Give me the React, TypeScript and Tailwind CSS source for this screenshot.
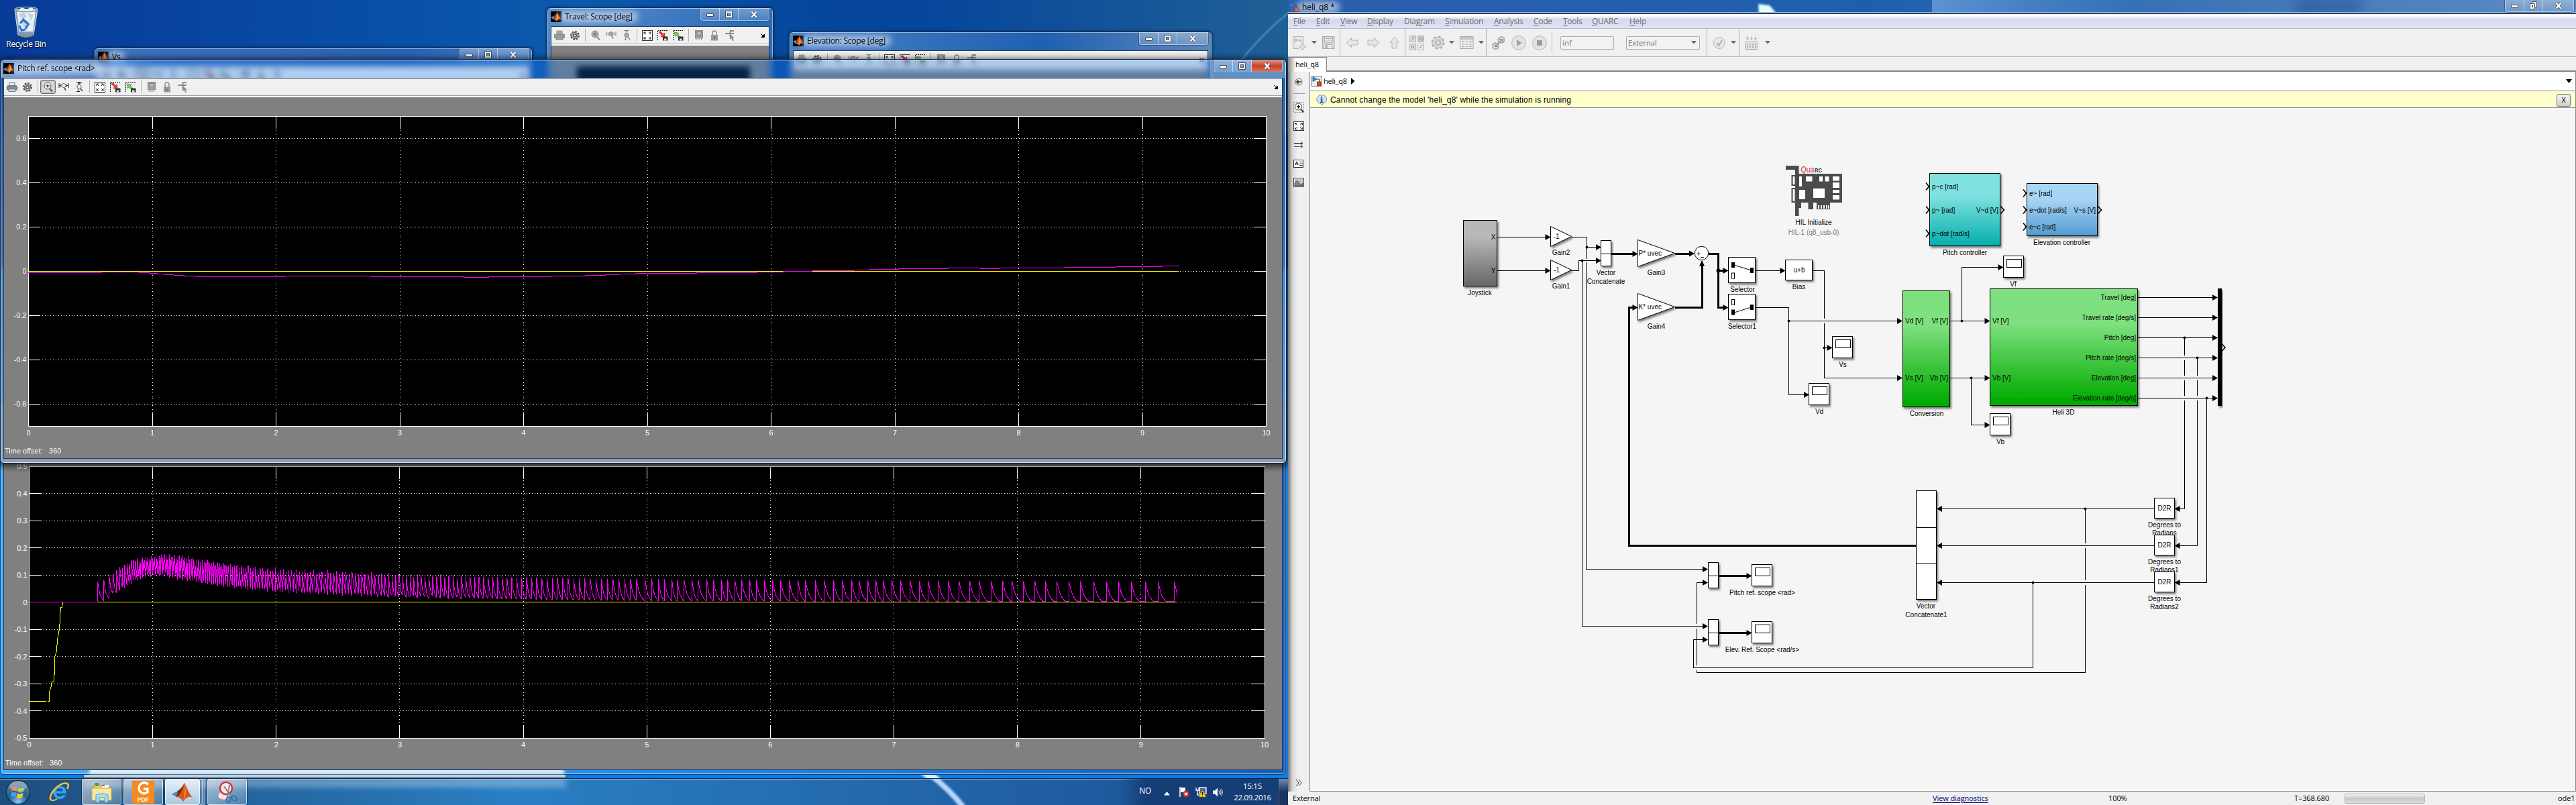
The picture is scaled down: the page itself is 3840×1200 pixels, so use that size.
import React from 'react';

const UI = "font-['Open_Sans','Noto_Sans',sans-serif]";
const ARIAL = "font-['Liberation_Sans',Arial,sans-serif]";

/* ---------- small icons ---------- */

function MatlabIcon({ s = 16 }: { s?: number }) {
  return (
    <svg width={s} height={s} viewBox="0 0 16 16" className="shrink-0">
      <rect width="16" height="16" fill="#000" />
      <path d="M0 9 L5 6.5 L7 9 L4 12 Z" fill="#4aa3b8" />
      <path d="M5 6.5 L9.500 1 L8 11 L4 12 Z" fill="#6b2a1a" />
      <path d="M9.500 1 C11 4 13 9 15.500 12 C13 10 11.500 11 9 15 C8 13 6 12 4 12 C7 10 8 6 9.500 1Z" fill="#e8651c" />
      <path d="M9.500 1.500 C10.200 5 10 9 9 14 C11 11 11.500 8 9.500 1.500Z" fill="#f7c04a" />
    </svg>
  );
}

function SimulinkIcon({ framed }: { framed?: boolean }) {
  return (
    <svg width="16" height="16" viewBox="0 0 16 16" className="shrink-0">
      {framed && <rect x=".5" y=".5" width="15" height="15" fill="#f0f0f0" stroke="#777" />}
      <path d="M2 1.500 L8 5 L2 8.500Z" fill="#2a8fd0" stroke="#1a5a90" strokeWidth=".8" />
      <path d="M8 5 H11.500 V9" stroke="#333" fill="none" />
      <rect x="8.500" y="9" width="5.500" height="5.500" fill="#e05020" stroke="#802000" strokeWidth=".8" />
    </svg>
  );
}

function Svg16({ children, className = '' }: { children: React.ReactNode; className?: string }) {
  return (
    <svg width="16" height="16" viewBox="0 0 16 16" fill="none" className={'shrink-0 ' + className}>
      {children}
    </svg>
  );
}

const Printer = ({ dim }: { dim?: boolean }) => (
  <Svg16>
    <path d="M4 1 H12 V6 H4Z" fill={dim ? '#aaa' : '#dfe9f5'} stroke={dim ? '#999' : '#6a7f99'} />
    <rect x=".5" y="6" width="15" height="6" rx="1" fill={dim ? '#999' : '#8b8f94'} stroke={dim ? '#8a8a8a' : '#555'} />
    <path d="M3 11 H13 V14.500 H3Z" fill={dim ? '#a5a5a5' : '#d3e4f5'} stroke={dim ? '#909090' : '#5e7c99'} />
  </Svg16>
);
const Gear = () => (
  <Svg16>
    <circle cx="8" cy="8" r="5.200" stroke="#555" strokeWidth="3.600" strokeDasharray="2.500 1.500" />
    <circle cx="8" cy="8" r="4.500" fill="#c4c4c4" stroke="#666" />
    <circle cx="8" cy="8" r="2.200" fill="#f0f0f0" stroke="#333" strokeWidth="1.200" />
  </Svg16>
);
const Zoom = ({ dim }: { dim?: boolean }) => (
  <Svg16>
    <circle cx="7" cy="6" r="5" fill={dim ? '#aaa' : '#e9f1fa'} stroke={dim ? '#888' : '#555'} />
    <path d="M4.500 6 H9.500 M7 3.500 V8.500" stroke={dim ? '#666' : '#111'} />
    <path d="M10 10 L14 14.500" stroke={dim ? '#888' : '#444'} strokeWidth="2" />
  </Svg16>
);
const ZoomX = ({ dim }: { dim?: boolean }) => (
  <Svg16>
    <path d="M1 2 V9 M15 2 V9 M1.500 5.500 H4 M12 5.500 H14.500" stroke={dim ? '#888' : '#222'} />
    <path d="M4.500 3.500 L2.500 5.500 L4.500 7.500 M11.500 3.500 L13.500 5.500 L11.500 7.500" stroke={dim ? '#888' : '#222'} />
    <circle cx="8" cy="5.500" r="3" fill={dim ? '#aaa' : '#eef'} stroke={dim ? '#888' : '#666'} />
    <path d="M9 9 L11 12.500" stroke={dim ? '#888' : '#444'} strokeWidth="1.600" />
  </Svg16>
);
const ZoomY = ({ dim }: { dim?: boolean }) => (
  <Svg16>
    <path d="M4 .5 H12 M4 14.500 H9 M8 1 V4 M6.500 11 V14 M6 3 L8 1.200 L10 3" stroke={dim ? '#888' : '#222'} />
    <circle cx="8" cy="7.500" r="3.200" fill={dim ? '#aaa' : '#eef'} stroke={dim ? '#888' : '#666'} />
    <path d="M10 10 L13 14" stroke={dim ? '#888' : '#444'} strokeWidth="1.600" />
  </Svg16>
);
const Fit = () => (
  <Svg16>
    <rect x=".5" y=".5" width="15" height="15" fill="#fff" stroke="#333" />
    <path d="M3 6 V3 H6 M10 3 H13 V6 M3 10 V13 H6 M13 10 V13 H10 M3.500 3.500 L6 6 M12.500 3.500 L10 6 M3.500 12.500 L6 10 M12.500 12.500 L10 10" stroke="#222" />
  </Svg16>
);
const SaveAxes = ({ green }: { green?: boolean }) => (
  <Svg16>
    <path d="M.5 15 V.5 H15.500" stroke="#111" strokeDasharray="2 1" />
    {green ? (
      <path d="M11.500 10 L7 6 L9 4.500 L2.500 3 L3.500 9.500 L5 7.500 L9.500 12Z" fill="#7ed957" stroke="#2f7d1a" strokeWidth=".8" />
    ) : (
      <path d="M2 3 L7 7.500 L5 9.500 L11 10.500 L10.500 4 L8.500 6 L4.500 1.500Z" fill="#f04040" stroke="#b01010" strokeWidth=".8" />
    )}
    <rect x="8" y="9.500" width="7.500" height="6" fill="#333" />
    <rect x="10" y="12.500" width="3.500" height="3" fill="#ddd" />
  </Svg16>
);
const Chip = () => (
  <Svg16>
    <rect x="2.500" y=".5" width="11" height="11.500" fill="#a0a0a0" stroke="#888" />
    <rect x="5" y="2.500" width="6" height="5" fill="#bcbcbc" stroke="#808080" />
    <path d="M4 13 V15 M6.500 13 V15 M9 13 V15 M11.500 13 V15" stroke="#999" />
  </Svg16>
);
const Lock = () => (
  <Svg16>
    <path d="M5 8 V4 a3 3 0 0 1 6 0 V8" stroke="#888" strokeWidth="1.400" />
    <rect x="3" y="7" width="10" height="8.500" fill="#9a9a9a" />
    <path d="M8 10 V13" stroke="#666" strokeWidth="1.500" />
  </Svg16>
);
const Probe = () => (
  <Svg16>
    <path d="M1 5 H14 M8 1 H14 M8.500 1 V10" stroke="#8c8c8c" strokeWidth="2" />
    <path d="M8 5 L15 12 L12.500 12 L14 15.500 L12 16 L10.500 12.500 L8 14Z" fill="#909090" />
  </Svg16>
);

const Sep = () => (
  <div className="flex h-full w-2 shrink-0 justify-center py-[3px]">
    <div className="w-px bg-[#b0b0b0]" />
  </div>
);
const Cell = ({ children, on }: { children: React.ReactNode; on?: boolean }) => (
  <div
    className={
      on
        ? 'flex h-[21px] w-[23px] shrink-0 items-center justify-center rounded-[3px] border border-[#6e6e6e] bg-[#d8d8d8] shadow-[inset_0_0_2px_1px_#b0b0b0]'
        : 'flex h-[21px] w-[23px] shrink-0 items-center justify-center'
    }
  >
    {children}
  </div>
);

function ScopeToolbar({ active }: { active?: boolean }) {
  const dim = !active;
  return (
    <div className="flex h-[28px] shrink-0 items-start border-b-2 border-white bg-[#f0f0f0] shadow-[inset_0_-1px_0_#a0a0a0]">
      <div className="flex h-[25px] w-full items-center">
        <Cell><Printer dim={dim} /></Cell>
        <Cell><Gear /></Cell>
        <Sep />
        <Cell on={active}><Zoom dim={dim} /></Cell>
        <Cell><ZoomX dim={dim} /></Cell>
        <Cell><ZoomY dim={dim} /></Cell>
        <Sep />
        <Cell><Fit /></Cell>
        <Cell><SaveAxes /></Cell>
        <Cell><SaveAxes green /></Cell>
        <Sep />
        <Cell><Chip /></Cell>
        <Cell><Lock /></Cell>
        <Cell><Probe /></Cell>
        <svg width="8" height="8" viewBox="0 0 8 8" className="mr-[5px] ml-auto">
          <path d="M1 1 L4.500 4.500 M6.500 2 V6.500 H2Z" fill="#000" stroke="#000" strokeWidth="1" />
        </svg>
      </div>
    </div>
  );
}

function Caption({ red, restore }: { red?: boolean; restore?: boolean }) {
  return (
    <div className="flex h-[19px] w-[103px] shrink-0 overflow-hidden rounded-b-[4px] border border-t-0 border-white/50 bg-white/10 shadow-[0_0_0_1px_rgba(10,30,70,.35)]">
      <div className="flex w-[28px] items-end justify-center border-r border-white/50 bg-linear-to-b from-white/25 to-white/5 pb-[5px]">
        <div className="h-[5px] w-[11px] rounded-[1px] border border-[#444a5c] bg-white" />
      </div>
      <div className="flex w-[28px] items-center justify-center border-r border-white/50 bg-linear-to-b from-white/25 to-white/5">
        {restore ? (
          <svg width="11" height="12" viewBox="0 0 11 12">
            <path d="M3.500 .5 H10.500 V8.500 H3.500Z" fill="#fff" stroke="#444a5c" />
            <path d="M.5 3.500 H7.500 V11.500 H.5Z" fill="#fff" stroke="#444a5c" />
            <rect x="3" y="6" width="2" height="3" fill="#444a5c" />
          </svg>
        ) : (
          <div className="flex size-[11px] items-center justify-center rounded-[1px] border border-[#444a5c] bg-white">
            <div className="size-[5px] border border-[#444a5c] bg-[#7f9fc8]" />
          </div>
        )}
      </div>
      <div
        className={
          red
            ? 'flex flex-1 items-center justify-center bg-linear-to-b from-[#e39a8c] via-[#c4402a] via-50% to-[#d8745a]'
            : 'flex flex-1 items-center justify-center bg-linear-to-b from-white/25 to-white/5'
        }
      >
        <svg width="12" height="11" viewBox="0 0 12 11">
          <path d="M2.500 1.500 L9.500 9.500 M9.500 1.500 L2.500 9.500" stroke="#444a5c" strokeWidth="4" />
          <path d="M2.500 1.500 L9.500 9.500 M9.500 1.500 L2.500 9.500" stroke="#fff" strokeWidth="2.400" />
        </svg>
      </div>
    </div>
  );
}

function TitleBar({ title, red }: { title: string; red?: boolean }) {
  return (
    <div className="flex h-[27px] shrink-0 items-start justify-between">
      <div className="flex items-center pt-[5px]">
        <MatlabIcon />
        <div className="relative ml-[5px]">
          <div className="absolute -inset-x-2 inset-y-0 rounded-full bg-white/55 blur-[5px]" />
          <div className={`relative text-[12px] leading-4 tracking-[-0.25px] whitespace-nowrap text-black ${UI}`}>{title}</div>
        </div>
      </div>
      <Caption red={red} />
    </div>
  );
}

/* ---------- scope plots ---------- */

function Grid({ x0, x1, y0, y1, ys, tickX, tickY }: { x0: number; x1: number; y0: number; y1: number; ys: [number, string][]; tickX: number; tickY: number }) {
  const step = (x1 - x0) / 10;
  const px = (n: number) => Math.floor(n) + 0.5;
  const [l, r, t, b] = [x0, x1, y0, y1].map(Math.floor);
  return (
    <g className={ARIAL} fontSize="11" fill="#fff">
      <rect x={px(x0)} y={px(y0)} width={px(x1) - px(x0)} height={px(y1) - px(y0)} fill="#000" stroke="#fff" />
      {Array.from({ length: 9 }, (_, i) => px(x0 + step * (i + 1))).map((x) => (
        <g key={x} stroke="#fff">
          <path d={`M${x} ${t + tickY + 2} V${b - tickY}`} strokeDasharray="1 5 1 3" />
          <path d={`M${x} ${t} v${tickY} M${x} ${b} v${-tickY}`} />
        </g>
      ))}
      {ys.map(([y, label]) => (
        <g key={y}>
          {y > y0 + 4 && y < y1 - 4 && (
            <g stroke="#fff">
              <path d={`M${l + tickX + 3} ${px(y)} H${r - tickX}`} strokeDasharray="1 3" />
              <path d={`M${l} ${px(y)} h${tickX} M${r} ${px(y)} h${-tickX}`} />
            </g>
          )}
          <text x={x0 - 3} y={y + 4} textAnchor="end">{label}</text>
        </g>
      ))}
      {Array.from({ length: 11 }, (_, i) => (
        <text key={i} x={x0 + step * i} y={y1 + 13.5} textAnchor="middle">{i}</text>
      ))}
    </g>
  );
}

const pitchSteps: [number, number][] = [
  [37, 109], [131, 106], [180, 109], [193, 112], [204, 115], [214, 118], [226, 121], [239, 124], [255, 127], [369, 124], [482, 127],
  [602, 130], [634, 127], [715, 124], [760, 121], [786, 118], [803, 115], [825, 112], [904, 109], [982, 106], [1018, 103], [1055, 100],
  [1108, 97], [1129, 94], [1166, 91], [1231, 88], [1273, 91], [1298, 88], [1382, 85], [1449, 82], [1508, 79], [1531, 79],
];
const pitchPath = pitchSteps
  .map(([x, y], i) => {
    const X = Math.round(x * 1.148);
    const Y = Math.floor(370 + y / 3) + 0.5;
    return i === 0 ? `M${X} ${Y}` : `H${X} V${Y}`;
  })
  .join(' ');

const tops: [number, number][] = [[145, 866], [156, 862], [168, 852], [184, 843], [199, 834], [214, 832], [232, 829], [245, 827], [272, 829], [294, 834], [318, 838], [349, 842], [380, 846], [428, 850], [526, 853], [588, 856], [673, 858], [765, 860], [918, 862], [1200, 864], [1500, 865], [1760, 866]];
const bottoms: [number, number][] = [[145, 896], [155, 894], [162, 889], [168, 885], [184, 875], [202, 864], [220, 857], [245, 856], [269, 862], [294, 865], [318, 870], [367, 876], [428, 881], [490, 884], [551, 887], [612, 888], [735, 891], [857, 893], [955, 894], [1200, 895], [1760, 896]];
const periods: [number, number][] = [[145, 9.5], [160, 6.5], [180, 3.7], [210, 2.5], [275, 2.5], [330, 3.1], [400, 3.8], [490, 4.4], [612, 5.5], [735, 7], [857, 8.2], [955, 9]];
function interp(t: [number, number][], x: number) {
  if (x <= t[0][0]) return t[0][1];
  for (let i = 1; i < t.length; i++) {
    if (x <= t[i][0]) {
      const [a, b] = t[i - 1];
      const [c, d] = t[i];
      return b + ((d - b) * (x - a)) / (c - a);
    }
  }
  return t[t.length - 1][1];
}
const lateSpikes = [3, 19, 35, 50, 67, 81, 97, 117, 132, 152, 169, 189, 203, 221, 238, 258, 273, 293, 313, 333, 353, 375, 393, 417, 439, 461, 483, 506, 524, 545, 564, 583, 603, 625, 647, 670, 691, 716, 741, 767, 793, 816, 845, 873, 896, 923, 952, 978, 1005, 1034, 1062, 1095, 1126, 1156, 1187, 1221, 1252, 1291].map((v) => Math.floor(960 + v * 0.6122) + 0.5);

function spikePath() {
  const xs: number[] = [];
  let x = 145.5;
  while (x < 957) {
    xs.push(x);
    x += interp(periods, x);
  }
  xs.push(...lateSpikes);
  let d = 'M44 896.5 H145.5';
  xs.forEach((s, i) => {
    const end = i + 1 < xs.length ? xs[i + 1] : 1755;
    const wobble = s < 700 ? Math.sin(i * 2.3) * 2.5 : 0;
    const t = interp(tops, s) + wobble;
    const b = interp(bottoms, end) + wobble * 0.8;
    const w = end - s;
    const last = i === xs.length - 1;
    if (last) {
      d += ` V${t} L${s + 2} ${t + 8} L${end} 888`;
      return;
    }
    d += ` L${s} ${t.toFixed(1)}`;
    const h = b - t;
    if (w > 5) {
      const tau = Math.min(w, 14);
      d += ` L${s + tau * 0.2} ${t + h * 0.42} L${s + tau * 0.4} ${t + h * 0.7} L${s + tau * 0.65} ${t + h * 0.88} L${s + tau * 0.9} ${b} H${end}`;
    } else {
      d += ` L${s + w * 0.5} ${t + h * 0.6} L${end - 0.3} ${b.toFixed(1)}`;
    }
  });
  return d;
}
const elevPath = spikePath();

const pitchYs: [number, string][] = [[206, '0.6'], [272, '0.4'], [338, '0.2'], [404, '0'], [470, '-0.2'], [536, '-0.4'], [602, '-0.6']];
const elevYs: [number, string][] = [0.5, 0.4, 0.3, 0.2, 0.1, 0, -0.1, -0.2, -0.3, -0.4, -0.5].map((v) => [896.5 - v * 405, String(v)]);

/* ---------- desktop icons ---------- */

function RecycleBin() {
  return (
    <svg width="38" height="48" viewBox="0 0 38 48">
      <path d="M2 5 L7 43 Q19 49 30 43 L36 5Z" fill="#a9bccb" fillOpacity=".75" stroke="#dfe8ee" />
      <path d="M5 9 L12 2 L20 5 L27 1 L33 8 L29 38 L9 38Z" fill="#e9f0f6" />
      <path d="M8 12 L16 8 L20 16 L12 20Z M21 10 L30 13 L26 22Z M12 24 L20 20 L27 28 L16 33Z" fill="#c3d3e0" />
      <path d="M10 26 l5 -6 l4 5 M9 29 l3 7 l6 -1 M18 34 l4 -7 l-4 -4" stroke="#2d6fd6" strokeWidth="3" fill="none" />
      <ellipse cx="19" cy="5" rx="17" ry="3.500" fill="none" stroke="#8b9aa5" strokeWidth="1.500" />
      <path d="M7 40 Q19 46 31 40 L30 44 Q19 49 8 44Z" fill="#8b8f90" />
    </svg>
  );
}

function TaskButton({ children, stack, bright, wide }: { children: React.ReactNode; stack?: boolean; bright?: boolean; wide?: string }) {
  return (
    <div className="flex h-[39px]">
      <div
        className={`flex h-full items-center justify-center rounded-[3px] border border-white/60 shadow-[0_0_0_1px_rgba(0,20,60,.5)] ${wide ?? 'w-[59px]'} ${bright ? 'bg-linear-to-b from-[#e8f0f8] to-[#a9c8e2]' : 'bg-linear-to-br from-white/60 to-white/20'}`}
      >
        {children}
      </div>
      {stack && (
        <>
          <div className="h-full w-[4px] rounded-r-[3px] border-y border-r border-white/60 bg-white/25" />
          <div className="h-full w-[4px] rounded-r-[3px] border-y border-r border-white/50 bg-white/20" />
        </>
      )}
    </div>
  );
}

function Taskbar() {
  return (
    <div className="absolute inset-x-0 bottom-0 flex h-[40px] items-stretch overflow-hidden border-t border-[#0d2a4d] bg-linear-to-r from-[#1d4e7c] via-[#2a7fc4] via-40% to-[#1c4f92] shadow-[inset_0_1px_0_rgba(255,255,255,.55)]">
      <div className="absolute top-0 left-[128px] h-[12px] w-[716px] bg-white/35 blur-[5px]" />
      <svg className="absolute top-0 left-[1370px]" width="90" height="40" viewBox="0 0 90 40">
        <path d="M12 -10 Q45 15 66 42" stroke="#b5d8ff" strokeWidth="8" fill="none" className="blur-[1.500px]" />
      </svg>
      <div className="absolute top-0 right-0 h-full w-[250px] bg-linear-to-r from-transparent via-[#153e76] via-15% to-[#153e76]" />
      <div className="relative flex w-[122px] items-center">
        <svg width="38" height="38" viewBox="0 0 38 38" className="ml-[8px]">
          <defs>
            <radialGradient id="orb" cx=".5" cy=".9" r=".8">
              <stop offset="0" stopColor="#7fd0f0" />
              <stop offset=".5" stopColor="#1f5f92" />
              <stop offset="1" stopColor="#5c7f99" />
            </radialGradient>
          </defs>
          <circle cx="19" cy="19" r="17.500" fill="url(#orb)" stroke="#0d2a45" strokeWidth="1.200" />
          <path d="M10 13 Q14 9 18 12 L17 18 Q13 15.500 9 18.500Z" fill="#f0562a" />
          <path d="M19.500 12.500 Q24 15 28.500 11.500 L27 18 Q23 21 18.500 18.500Z" fill="#8cc63e" />
          <path d="M8.500 20 Q12.500 17.500 16.700 20 L15.500 26 Q12 24 7.500 26.500Z" fill="#3fa0e8" />
          <path d="M18 20.500 Q22 23 26.700 20 L25 27 Q21 29.500 16.700 27Z" fill="#fcc52c" />
          <ellipse cx="19" cy="10" rx="13" ry="7.500" fill="#fff" opacity=".3" />
        </svg>
        <svg width="34" height="32" viewBox="0 0 34 32" className="ml-[26px]">
          <path d="M17 6.500 a10 10 0 1 0 9.500 13.500 h-5.500 a5 5 0 0 1 -9 -2 h15 q.5 -11.500 -10 -11.500Z M12 14 a5 4.500 0 0 1 9.800 0Z" fill="#35a5ee" stroke="#0d5fae" strokeWidth=".8" fillRule="evenodd" />
          <path d="M4 28 C-2 20 18 -1 28 3 C31 4.500 30 8 28 11" fill="none" stroke="#f3c033" strokeWidth="2.600" />
          <path d="M4 27 C6 29 10 28 13 26" fill="none" stroke="#f3c033" strokeWidth="2" />
        </svg>
      </div>
      <div className="relative flex gap-[3px]">
        <TaskButton>
          <svg width="34" height="32" viewBox="0 0 34 32">
            <path d="M5 4 h8 l2 3 h14 v20 h-24Z" fill="#e9cf7b" stroke="#b89b45" />
            <rect x="7" y="2" width="5" height="5" fill="#3aa646" />
            <rect x="17" y="5" width="10" height="4" fill="#fff" />
            <rect x="17" y="5" width="4" height="2" fill="#d43" />
            <path d="M2 10 h29 v18 h-29Z" fill="#f7e7a4" stroke="#c9ab50" />
            <path d="M8 31 v-11 q9 -4 18 0 v11 h-5 v-7 h-8 v7Z" fill="#a9dcf5" stroke="#4b9ccc" />
          </svg>
        </TaskButton>
        <TaskButton>
          <div className="flex h-[34px] w-[33px] flex-col items-center bg-[#f58a1f]">
            <svg width="26" height="23" viewBox="0 0 26 23">
              <path d="M20 5.500 A8 8 0 1 0 19 17 V12 H13" fill="none" stroke="#fff" strokeWidth="3.400" />
            </svg>
            <span className={`text-[9px] leading-[10px] font-bold text-white ${ARIAL}`}>PDF</span>
          </div>
        </TaskButton>
        <TaskButton bright stack wide="w-[52px]">
          <svg width="34" height="30" viewBox="0 0 34 30">
            <path d="M1 18 L10 13 L14 17 L8 22Z" fill="#3f8fc0" />
            <path d="M10 13 Q16 9 20 1 L17 21 L8 22Z" fill="#7a2a20" />
            <path d="M20 1 C23 7 27 18 33 24 C28 20 24 21 18 29 C16 25 12 22 8 22 C15 19 17 10 20 1Z" fill="#d9541e" />
            <path d="M20 2 C21 9 21 18 18 28 C22 21 23 12 20 2Z" fill="#f9b040" />
          </svg>
        </TaskButton>
        <TaskButton>
          <svg width="34" height="34" viewBox="0 0 34 34">
            <ellipse cx="12" cy="22" rx="9" ry="6" fill="#f6e4e6" stroke="#d9a0a8" />
            <circle cx="15" cy="11" r="9" fill="#fbeff0" stroke="#d2323f" strokeWidth="2.500" />
            <path d="M12 8 L23 25 M20 6 L17 24" stroke="#7d8790" strokeWidth="2" />
            <ellipse cx="27" cy="26" rx="4.500" ry="3" transform="rotate(35 27 26)" fill="none" stroke="#2a7ab8" strokeWidth="2.200" />
            <ellipse cx="18.500" cy="28" rx="2.800" ry="4" fill="none" stroke="#2a7ab8" strokeWidth="2.200" />
          </svg>
        </TaskButton>
      </div>
      <div className={`relative ml-auto flex items-center text-[12px] tracking-[-0.3px] text-white ${UI}`}>
        <span className="mr-[19px] -mt-1 text-[12px]">NO</span>
        <svg width="9" height="6" viewBox="0 0 9 6" className="mt-1 mr-[13px]"><path d="M4.500 0 L9 5.500 H0Z" fill="#fff" /></svg>
        <svg width="17" height="17" viewBox="0 0 17 17" className="mr-[8px]">
          <path d="M2 1 V16" stroke="#fff" strokeWidth="1.500" />
          <path d="M3 2 H10 V9 H3Z" fill="#fff" />
          <circle cx="11" cy="11.500" r="4.800" fill="#d8222a" />
          <path d="M9 9.500 L13 13.500 M13 9.500 L9 13.500" stroke="#fff" strokeWidth="1.500" />
        </svg>
        <svg width="17" height="17" viewBox="0 0 17 17" className="mr-[8px]">
          <path d="M1 2 V6 H5 V2 M3 6 V13 H6" stroke="#fff" strokeWidth="1.300" fill="none" />
          <rect x="6" y="2" width="10" height="9" fill="#4a6c93" stroke="#fff" strokeWidth="1.300" />
          <path d="M10.500 6 L16 16 H5Z" fill="#fbd01e" stroke="#8a6b00" strokeWidth=".6" />
          <path d="M10.500 9 V13 M10.500 14 V15" stroke="#000" strokeWidth="1.300" />
        </svg>
        <svg width="16" height="16" viewBox="0 0 16 16" className="mr-[15px]">
          <path d="M1 5.500 H4 L8 1.500 V14.500 L4 10.500 H1Z" fill="#fff" />
          <path d="M10 5.500 Q11.500 8 10 10.500 M12 4 Q14.500 8 12 12 M14 2.500 Q17 8 14 13.500" stroke="#d5e3f5" fill="none" />
        </svg>
        <div className="mr-[10px] flex w-[58px] flex-col items-center gap-[1px] text-[11.500px] leading-4 whitespace-nowrap">
          <span>15:15</span>
          <span>22.09.2016</span>
        </div>
        <div className="h-full w-[14px] border-l border-white/40 bg-linear-to-b from-[#6b8bb5] via-[#17355e] to-[#17355e] shadow-[-1px_0_0_#0a1c38]" />
      </div>
    </div>
  );
}

function Desktop() {
  return (
    <div className="relative h-[1200px] w-[1920px] shrink-0 overflow-hidden bg-linear-to-b from-[#0a55b8] via-[#1f7fd8] to-[#0c7be0]">
      <div className="absolute inset-x-0 top-0 h-[400px] bg-linear-to-r from-[#083a98] via-[#0b5aae] via-45% to-[#05459c] to-65%" />
      <div className="absolute top-0 right-0 h-[200px] w-[560px] bg-linear-to-r from-transparent to-[#1f6096]" />
      <svg className="absolute top-0 left-[1800px]" width="120" height="120" viewBox="0 0 120 120">
        <path d="M122 18 Q70 60 36 110" stroke="#6fb2d8" strokeWidth="2" fill="none" opacity=".7" className="blur-[1px]" />
      </svg>
      <svg className="absolute top-[1148px] left-[1350px]" width="60" height="20" viewBox="0 0 60 20">
        <path d="M20 -6 L50 20" stroke="#d8f0ff" strokeWidth="14" fill="none" className="blur-[1.500px]" />
      </svg>
      <div className="absolute top-[9px] left-[4px] flex w-[70px] flex-col items-center">
        <RecycleBin />
        <span className={`text-[12px] leading-[18px] tracking-[-0.3px] whitespace-nowrap text-white [text-shadow:1px_1px_2px_#000] ${UI}`}>Recycle Bin</span>
      </div>

      {/* edge of the window that sits behind the lower scope */}
      <div className="absolute top-[1140px] left-[124px] h-[20px] w-[720px] border border-[#2a4a6a] bg-[#c9ced4]" />

      <div className="absolute top-[71px] left-[140px] flex h-[200px] w-[654px] flex-col rounded-t-[6px] border border-[#0b2c5c] bg-linear-to-r from-[#3f73c0] via-[#2a62b4] via-70% to-[#3a78c6] px-[5px] shadow-[0_0_4px_rgba(0,0,0,.6),inset_0_0_0_1px_rgba(255,255,255,.5)]">
        <TitleBar title="Vs" />
        <div className="flex flex-1 flex-col bg-[#808080]"><ScopeToolbar active /></div>
      </div>

      <div className="absolute top-[11px] left-[815px] flex h-[260px] w-[338px] flex-col rounded-t-[6px] border border-[#0b2c5c] bg-linear-to-br from-[#5c8fcf] via-[#2a6cb8] to-[#4a80c0] px-[5px] shadow-[0_0_4px_rgba(0,0,0,.6),inset_0_0_0_1px_rgba(255,255,255,.5)]">
        <TitleBar title="Travel: Scope [deg]" />
        <div className="flex flex-1 flex-col border border-[#1c3a66] bg-[#808080]">
          <ScopeToolbar />
          <div className="mt-[31px] mr-[28px] ml-[38px] flex-1 bg-black" />
        </div>
      </div>

      <div className="absolute top-[47px] left-[1176px] flex h-[200px] w-[631px] flex-col rounded-t-[6px] border border-[#0b2c5c] bg-linear-to-r from-[#4a82c6] via-[#1e60b0] via-60% to-[#5c88ba] px-[5px] shadow-[0_0_4px_rgba(0,0,0,.6),inset_0_0_0_1px_rgba(255,255,255,.5)]">
        <TitleBar title="Elevation: Scope [deg]" />
        <div className="flex flex-1 flex-col border border-[#1c3a66] bg-[#808080]"><ScopeToolbar /></div>
      </div>

      {/* lower scope window */}
      <div className="absolute top-[600px] left-0 h-[555px] w-[1917px] rounded-b-[6px] border border-[#0c3d78] bg-linear-to-r from-[#43b0fb] via-[#1f8bea] to-[#1a5cb8] pr-[4px] pb-[6px] pl-[4px] shadow-[inset_0_0_0_1px_rgba(200,235,255,.8)]">
        <div className="absolute bottom-[1px] left-[132px] h-[6px] w-[708px] bg-white blur-[2px]" />
        <div className="relative h-full overflow-hidden border border-[#1c3a66] bg-[#808080]">
          <svg width="1906" height="547" viewBox="6 601 1906 547">
            <Grid x0={43.5} x1={1885} y0={694.5} y1={1099} ys={elevYs} tickX={19} tickY={19} />
            <path d="M44 896.500 H1754.500" stroke="#ff0" fill="none" />
            <path d="M44 1044.500 H69 M71 1044 H73.500 V1031 L76 1023 L77.500 1015 H80 V1004.500 H81.500 V979 L84 971 L86 950 L88.500 937 L90 912.500 L91 904 H92.500 L93.500 897" stroke="#ff0" fill="none" shapeRendering="crispEdges" />
            <path d={elevPath} stroke="#f0f" fill="none" strokeWidth="1" strokeLinejoin="bevel" shapeRendering="crispEdges" />
            <text x="8" y="1140" fontSize="11" fill="#fff" className={ARIAL} xmlSpace="preserve">Time offset:   360</text>
          </svg>
        </div>
      </div>

      {/* focused scope window */}
      <div className="absolute top-[88px] left-0 flex h-[603px] w-[1918px] flex-col rounded-[6px] border border-[#0d1c33] bg-linear-to-b from-[#1478eb]/30 from-5% via-[#5a9ae0]/40 via-20% to-[#9fb8d6]/55 pr-[5px] pb-[6px] pl-[4px] shadow-[0_2px_10px_3px_rgba(0,0,0,.65),inset_0_0_0_1px_rgba(230,242,255,.8)] backdrop-blur-[4px]">
        <div className="absolute top-px left-px h-[26px] w-[230px] rounded-tl-[5px] bg-linear-to-r from-[#c3d3ec]/60 via-[#c3d3ec]/35 via-60% to-transparent" />
        <div className="absolute top-px right-px h-[26px] w-[112px] rounded-tr-[5px] bg-[#c3d3ec]/40" />
        <div className="relative"><TitleBar title="Pitch ref. scope <rad>" red /></div>
        <div className="relative flex flex-1 flex-col overflow-hidden border border-[#2a3c55] bg-[#808080]">
          <ScopeToolbar active />
          <svg width="1907" height="539" viewBox="6 145 1907 539" className="shrink-0">
            <Grid x0={42.5} x1={1887.5} y0={173} y1={635} ys={pitchYs} tickX={18} tickY={19} />
            <path d={pitchPath} stroke="#f0f" fill="none" shapeRendering="crispEdges" />
            <path d="M43 404.500 H1168 M1211 404.500 H1757" stroke="#ff0" fill="none" />
            <text x="7" y="676" fontSize="11" fill="#fff" className={ARIAL} xmlSpace="preserve">Time offset:   360</text>
          </svg>
        </div>
      </div>

      <Taskbar />
    </div>
  );
}

/* ---------- Simulink diagram ---------- */

type P = { x: number; y: number };
const T = ({ x, y, children, a = 'middle', fill = '#000', s = 10, w }: P & { children: React.ReactNode; a?: 'middle' | 'start' | 'end'; fill?: string; s?: number; w?: number }) => (
  <text x={x} y={y + 3.5} textAnchor={a} fill={fill} fontSize={s} textLength={w} lengthAdjust="spacingAndGlyphs">{children}</text>
);
const Box = ({ x, y, w, h, fill = '#fff' }: P & { w: number; h: number; fill?: string }) => (
  <rect x={x} y={y} width={w} height={h} fill={fill} stroke="#000" filter="url(#sh)" />
);
const AR = ({ x, y }: P) => <path d={`M${x} ${y} l-8 -4.500 v9Z`} fill="#000" />;
const AL = ({ x, y }: P) => <path d={`M${x} ${y} l8 -4.500 v9Z`} fill="#000" />;
const Dot = ({ x, y }: P) => <circle cx={x} cy={y} r="2" fill="#000" />;
const W = ({ d, t }: { d: string; t?: boolean }) => (
  <path d={d} stroke="#000" strokeWidth={t ? 3 : 1} fill="none" shapeRendering="crispEdges" />
);
const Scope = ({ x, y, name, lx }: P & { name: string; lx?: number }) => (
  <g>
    <Box x={x} y={y} w={30} h={32} />
    <rect x={x + 5} y={y + 5} width="22" height="12" fill="#fff" stroke="#000" />
    <T x={lx ?? x + 15.5} y={y + 41.5}>{name}</T>
  </g>
);
const Tri = ({ x, y, w, h, text, tx, name }: P & { w: number; h: number; text: string; tx: number; name: string }) => (
  <g>
    <path d={`M${x} ${y - h / 2} L${x + w} ${y} L${x} ${y + h / 2}Z`} fill="#fff" stroke="#000" filter="url(#sh)" />
    <T x={tx} y={y} a="start">{text}</T>
    <T x={x + w / 2} y={y + h / 2 + 9}>{name}</T>
  </g>
);
const InPort = ({ x, y }: P) => <path d={`M${x - 5} ${y - 5.5} L${x - 0.5} ${y} L${x - 5} ${y + 5.5}`} stroke="#000" strokeWidth="1.600" fill="none" />;
const OutPort = ({ x, y }: P) => <path d={`M${x + 0.5} ${y - 5.5} L${x + 5.5} ${y} L${x + 0.5} ${y + 5.5}`} stroke="#000" strokeWidth="1.600" fill="none" />;

function Diagram() {
  return (
    <svg width="1886" height="1018" viewBox="1953 161 1886 1018" className={`block ${ARIAL}`}>
      <defs>
        <filter id="sh" x="-20%" y="-20%" width="150%" height="150%">
          <feDropShadow dx="2" dy="2.500" stdDeviation="1.500" floodColor="#000" floodOpacity=".5" />
        </filter>
        <linearGradient id="gGray" x2="0" y2="1"><stop offset=".25" stopColor="#b8b8b8" /><stop offset="1" stopColor="#666" /></linearGradient>
        <linearGradient id="gGreen" x2="0" y2="1"><stop offset=".3" stopColor="#7fe07f" /><stop offset=".95" stopColor="#04ac04" /></linearGradient>
        <linearGradient id="gTeal" x2="0" y2="1"><stop offset=".3" stopColor="#80e2e0" /><stop offset="1" stopColor="#05aead" /></linearGradient>
        <linearGradient id="gBlue" x2="0" y2="1"><stop offset=".3" stopColor="#a9d5f5" /><stop offset="1" stopColor="#529bd0" /></linearGradient>
      </defs>

      {/* signal lines */}
      <W d="M2232 353.500 H2305 M2232 403.500 H2305" />
      <AR x={2311.5} y={353.5} /><AR x={2311.5} y={403.5} />
      <W d="M2342 353.500 H2365.500 V368.500 H2380 M2342 403.500 H2353.500 V388.500 H2380" />
      <AR x={2387} y={368.5} /><AR x={2387} y={388.5} />
      <Dot x={2365.5} y={368.5} /><Dot x={2358.5} y={388.5} />
      <W d="M2364.500 368 V386 M2364.500 391 V848.500 H2540 M2358.500 388 V933.500 H2540" />
      <AR x={2546} y={848.5} /><AR x={2546} y={933.5} />
      <W t d="M2402 378.500 H2436 M2497 378.500 H2520 M2547 378.500 H2561.500 V458.500 H2570 M2561 403.500 H2570 M2497 458.500 H2537.500 V396 M2436 458.500 H2428.500 V813.500 H2856" />
      <AR x={2441.5} y={378.5} /><AR x={2526} y={378} /><AR x={2576.5} y={403.5} /><AR x={2576.5} y={458.5} /><AR x={2441.5} y={458.5} />
      <path d="M2537 388 l-4 8.500 h8Z" />
      <circle cx="2561.500" cy="403.500" r="3" />
      <W d="M2617 403.500 H2655 M2702 403.500 H2719.500 V475 M2719.500 482 V563.500 H2830 M2719.500 518.500 H2726" />
      <AR x={2661.5} y={403.5} /><AR x={2836} y={563.5} /><AR x={2731.5} y={518.5} /><Dot x={2719.5} y={518.5} />
      <W d="M2617 458.500 H2666.500 V588.500 H2690 M2666.500 478.500 H2830" />
      <AR x={2697} y={588.5} /><AR x={2836} y={478.5} /><Dot x={2666.5} y={478.5} />
      <W d="M2907 478.500 H2960 M2924.500 478 V398.500 H2980 M2907 563.500 H2960 M2938.500 563 V633.500 H2960" />
      <AR x={2966.5} y={478.5} /><AR x={2986.5} y={398.5} /><AR x={2966.5} y={563.5} /><AR x={2966.5} y={633.5} />
      <Dot x={2924.5} y={478.5} /><Dot x={2938.5} y={563.5} />
      {[443.5, 473.5, 503.5, 533.5, 563.5, 593.5].map((y) => (
        <g key={y}><W d={`M3187 ${y} H3300`} /><AR x={3306} y={y} /></g>
      ))}
      <W d="M3256.500 503 V530 M3256.500 537 V560 M3256.500 567 V590 M3256.500 597 V758.500 H3247 M3275.500 533 V560 M3275.500 567 V590 M3275.500 597 V813.500 H3247 M3289.500 593 V868.500 H3247" />
      <Dot x={3256.5} y={503.5} /><Dot x={3275.5} y={533.5} /><Dot x={3289.5} y={593.5} />
      <AL x={3241.5} y={758.5} /><AL x={3241.5} y={813.5} /><AL x={3241.5} y={868.5} />
      <W d="M3211 758.500 H2892 M3211 813.500 H2892 M3211 868.500 H2892" />
      <AL x={2887} y={758.5} /><AL x={2887} y={813.5} /><AL x={2887} y={868.5} />
      <Dot x={3108.5} y={758.5} /><Dot x={3030.5} y={868.5} />
      <W d="M3108.500 758 V810 M3108.500 817 V865 M3108.500 872 V1002.500 H2529.500 V999 M2529.500 992 V937 M2529.500 930 V868.500 H2540" />
      <W d="M3030.500 868 V995.500 H2524.500 V953.500 H2540" />
      <AR x={2546} y={868.5} /><AR x={2546} y={953.5} />
      <W t d="M2561 858.500 H2605 M2561 943.500 H2605" />
      <AR x={2611.5} y={858.5} /><AR x={2611.5} y={943.5} />

      {/* blocks */}
      <Box x={2181.5} y={328.5} w={50} h={98} fill="url(#gGray)" />
      <T x={2229.5} y={353} a="end">X</T><T x={2229.5} y={403} a="end">Y</T><T x={2206} y={436}>Joystick</T>
      <Tri x={2311.5} y={352.5} w={31} h={30} text="-1" tx={2316} name="Gain2" />
      <Tri x={2311.5} y={402.5} w={31} h={30} text="-1" tx={2316} name="Gain1" />
      <Box x={2386.5} y={358.5} w={15} h={38} /><W d="M2387 378.500 H2401" />
      <T x={2394} y={406}>Vector</T><T x={2394} y={419}>Concatenate</T>
      <Tri x={2441.5} y={377.5} w={55} h={40} text="P* uvec" tx={2442.5} name="Gain3" />
      <Tri x={2441.5} y={457.5} w={55} h={40} text="K* uvec" tx={2442.5} name="Gain4" />
      <circle cx="2536.500" cy="377.500" r="10.200" fill="#fff" stroke="#000" />
      <T x={2532} y={378}>+</T><path d="M2535 383.500 h5" stroke="#000" />

      <Box x={2576.5} y={383.5} w={40} h={38} />
      <rect x="2581" y="391" width="5" height="8" /><rect x="2581.500" y="407" width="4" height="8" fill="none" stroke="#000" />
      <rect x="2609" y="399" width="5" height="8" /><path d="M2585 395 L2609 402.500" stroke="#000" />
      <T x={2597.5} y={431}>Selector</T>
      <Box x={2576.5} y={438.5} w={40} h={38} />
      <rect x="2581.500" y="446.500" width="4" height="8" fill="none" stroke="#000" /><rect x="2581" y="461.500" width="5" height="8" />
      <rect x="2609" y="454" width="5" height="8" /><path d="M2585 466 L2609 458.500" stroke="#000" />
      <T x={2597} y={486}>Selector1</T>
      <Box x={2661.5} y={387.5} w={40} h={30} /><T x={2682} y={402.5}>u+b</T><T x={2681.5} y={427}>Bias</T>
      <Scope x={2731.5} y={501.5} name="Vs" /><Scope x={2696.5} y={571.5} name="Vd" />
      <Scope x={2986.5} y={381.5} name="Vf" lx={3001} /><Scope x={2966.5} y={616.5} name="Vb" />

      <Box x={2876.5} y={258.5} w={105} h={108} fill="url(#gTeal)" />
      <InPort x={2876} y={278} /><InPort x={2876} y={313} /><InPort x={2876} y={348} /><OutPort x={2982} y={313} />
      <T x={2880} y={278} a="start">p~c [rad]</T><T x={2880} y={313} a="start">p~ [rad]</T><T x={2880} y={348} a="start">p~dot [rad/s]</T>
      <T x={2979} y={313} a="end">V~d [V]</T><T x={2929} y={376}>Pitch controller</T>
      <Box x={3021.5} y={273.5} w={105} h={78} fill="url(#gBlue)" />
      <InPort x={3021} y={288} /><InPort x={3021} y={313} /><InPort x={3021} y={338} /><OutPort x={3127} y={313} />
      <T x={3025} y={288} a="start">e~ [rad]</T><T x={3025} y={313} a="start">e~dot [rad/s]</T><T x={3025} y={338} a="start">e~c [rad]</T>
      <T x={3124} y={313} a="end">V~s [V]</T><T x={3073.5} y={361}>Elevation controller</T>

      <Box x={2836.5} y={433.5} w={70} h={173} fill="url(#gGreen)" />
      <T x={2840} y={478} a="start">Vd [V]</T><T x={2904} y={478} a="end">Vf [V]</T><T x={2840} y={563} a="start">Vs [V]</T><T x={2904} y={563} a="end">Vb [V]</T>
      <T x={2872} y={616}>Conversion</T>
      <Box x={2966.5} y={430.5} w={220} h={174} fill="url(#gGreen)" />
      <T x={2970} y={478} a="start">Vf [V]</T><T x={2970} y={563} a="start">Vb [V]</T>
      {['Travel [deg]', 'Travel rate [deg/s]', 'Pitch [deg]', 'Pitch rate [deg/s]', 'Elevation [deg]', 'Elevation rate [deg/s]'].map((t, i) => (
        <T key={t} x={3184} y={443 + i * 30} a="end">{t}</T>
      ))}
      <T x={3076} y={614}>Heli 3D</T>
      <rect x="3306" y="430" width="6" height="175" filter="url(#sh)" /><OutPort x={3311.5} y={518} />

      <Box x={2856.5} y={731.5} w={30} h={162} /><W d="M2857 786.500 H2886 M2857 840.500 H2886" />
      <T x={2871} y={903}>Vector</T><T x={2871.5} y={916}>Concatenate1</T>
      {['Radians', 'Radians1', 'Radians2'].map((t, i) => (
        <g key={t}>
          <Box x={3211.5} y={742.5 + i * 55} w={30} h={30} />
          <T x={3226.5} y={757.5 + i * 55}>D2R</T>
          <T x={3226.5} y={782 + i * 55}>Degrees to</T>
          <T x={3226.5} y={794.5 + i * 55}>{t}</T>
        </g>
      ))}

      <Box x={2546.5} y={838.5} w={15} h={38} /><W d="M2547 858.500 H2561" />
      <Scope x={2611.5} y={841.5} name="Pitch ref. scope <rad>" />
      <Box x={2546.5} y={923.5} w={15} h={38} /><W d="M2547 943.500 H2561" />
      <Scope x={2611.5} y={926.5} name="Elev. Ref. Scope <rad/s>" />

      {/* HIL board */}
      <g fill="#4a4b4d">
        <path d="M2662 247 H2681.500 V322 H2676 V253 H2662Z" />
        <path d="M2681 259 H2746 V302 H2728 V312 H2708 V302 H2703 V312 H2695.500 V302 H2685 V310 H2681Z" />
        <path d="M2670.500 261 h6 v16 h-6Z M2670.500 280 h6 v22 h-6Z" />
      </g>
      <g fill="#fff">
        <path d="M2672.500 263 h3 v12 h-3Z M2672.500 282 h3 v18 h-3Z M2682 263 h4 v15 h-4Z M2682 283 h9 v14 h-9Z M2692 263 h9.500 v7.500 h-9.500Z M2712 263 h5 v7.500 h-5Z M2720.500 263 h6 v7.500 h-6Z" />
        <path d="M2703 281 h17 v14 h-17Z M2732 263 h10 v6.500 h-10Z M2732 272 h10 v8 h-10Z M2732 283 h10 v5 h-10Z M2732 291 h10 v6.500 h-10Z" />
        <path d="M2710 306 h2 v5 h-2Z M2714 306 h2 v5 h-2Z M2718 306 h2 v5 h-2Z M2722 306 h2 v5 h-2Z M2725 306 h1.500 v5 h-1.500Z" />
      </g>
      <text x="2684.500" y="256.500" fontSize="13" fill="#d8202c" textLength="20" lengthAdjust="spacingAndGlyphs">Qua</text>
      <text x="2705" y="256.500" fontSize="9" fontWeight="bold" fill="#222" textLength="11" lengthAdjust="spacingAndGlyphs">RC</text>
      <T x={2703.5} y={331}>HIL Initialize</T>
      <T x={2703.5} y={346} fill="#777">HIL-1 (q8_usb-0)</T>
    </svg>
  );
}

/* ---------- Simulink window ---------- */

const menus: [string, number, string][] = [
  ['File', 1, 'w-[34px]'], ['Edit', 1, 'w-[36px]'], ['View', 1, 'w-[40px]'], ['Display', 1, 'w-[55px]'], ['Diagram', 5, 'w-[61px]'], ['Simulation', 1, 'w-[73px]'],
  ['Analysis', 1, 'w-[59px]'], ['Code', 1, 'w-[44px]'], ['Tools', 1, 'w-[43px]'], ['QUARC', 1, 'w-[56px]'], ['Help', 1, 'w-[40px]'],
];

const Caret = () => (
  <svg width="8" height="5" viewBox="0 0 8 5" className="shrink-0"><path d="M0 0 H8 L4 4.500Z" fill="#6a6a6a" /></svg>
);
const G = '#b4b4b4';

function Toolbar() {
  return (
    <div className="flex h-[42px] shrink-0 items-stretch border-b border-[#b4b4b4] bg-[#f0f0f0]">
      <div className="flex w-[78px] items-center border-r border-[#b4b4b4] pl-[7px]">
        <svg width="20" height="20" viewBox="0 0 20 20" fill="none" stroke={G}>
          <path d="M.5 .5 H16 V11 M9 18.500 H.5 V.5" fill="#e8e8e8" />
          <path d="M3 3 L8 6 L3 9Z M8 6 H12.500 V10" fill="#ccc" />
          <path d="M13 11 H16 V14 H19 V17 H16 V19.500 H13 V17 H10 V14 H13Z" fill="#e4e4e4" />
        </svg>
        <div className="ml-[8px]"><Caret /></div>
        <svg width="19" height="19" viewBox="0 0 19 19" fill="none" stroke="#aaa" className="ml-[8px]">
          <rect x=".5" y=".5" width="17.500" height="18" fill="#d8d8d8" /><rect x="3.500" y="1" width="12" height="8" fill="#f4f4f4" />
          <path d="M5 3.500 H14 M5 6 H14" /><rect x="4.500" y="12.500" width="10" height="6" fill="#eee" /><rect x="6.500" y="14" width="2" height="4" />
        </svg>
      </div>
      <div className="flex w-[97px] items-center gap-[13px] border-r border-[#b4b4b4] pl-[8px]">
        <svg width="19" height="18" viewBox="0 0 19 18"><path d="M1 8.500 L8.500 1.500 V5 H18 V12 H8.500 V15.500Z" fill="#e6e6e6" stroke={G} /></svg>
        <svg width="19" height="18" viewBox="0 0 19 18"><path d="M18 8.500 L10.500 1.500 V5 H1 V12 H10.500 V15.500Z" fill="#e6e6e6" stroke={G} /></svg>
        <svg width="17" height="19" viewBox="0 0 17 19"><path d="M8.500 1 L15.500 9 H12 V18 H5 V9 H1.500Z" fill="#e6e6e6" stroke={G} /></svg>
      </div>
      <div className="flex w-[121px] items-center border-r border-[#b4b4b4] pl-[6px]">
        <svg width="23" height="22" viewBox="0 0 23 22" fill="#ddd" stroke={G}>
          <rect x=".5" y=".5" width="9" height="9" /><rect x="12.500" y=".5" width="9" height="9" fill="#c6c6c6" />
          <rect x=".5" y="12.500" width="9" height="9" /><rect x="12.500" y="12.500" width="9" height="9" fill="#eee" />
          <path d="M2 8 L5 5 V1 M5 5 L8 2 M14 6 Q15.500 2 17 5 T20 4 M14 18 H17 V15 H20" fill="none" stroke="#999" /><rect x="3.500" y="15.500" width="3" height="3" stroke="#999" />
        </svg>
        <svg width="21" height="21" viewBox="0 0 21 21" fill="none" className="ml-[9px]">
          <circle cx="10.500" cy="10.500" r="8.500" stroke="#b0b0b0" strokeWidth="3" strokeDasharray="3.700 3" />
          <circle cx="10.500" cy="10.500" r="7.800" fill="#e0e0e0" stroke="#b0b0b0" /><circle cx="10.500" cy="10.500" r="4.500" fill="#ccc" stroke="#a8a8a8" /><circle cx="10.500" cy="10.500" r="2.500" fill="#eee" stroke="#b0b0b0" />
        </svg>
        <div className="ml-[6px]"><Caret /></div>
        <svg width="21" height="19" viewBox="0 0 21 19" fill="none" stroke="#a8a8a8" className="ml-[8px]">
          <rect x=".5" y=".5" width="19.500" height="18" fill="#eaeaea" /><path d="M1 3 H20" strokeWidth="4" stroke="#c4c4c4" />
          <path d="M3 8 H7 M9 8 H12 M14 8 H18 M3 12 H7 M9 12 H12 M14 12 H18 M3 15.500 H7 M9 15.500 H12 M14 15.500 H18" />
        </svg>
        <div className="ml-[7px]"><Caret /></div>
      </div>
      <div className="flex w-[329px] items-center border-r border-[#b4b4b4] pl-[8px]">
        <svg width="20" height="20" viewBox="0 0 20 20" fill="none" stroke="#b0b0b0">
          <circle cx="14" cy="5.500" r="4.500" strokeWidth="2" /><circle cx="5.500" cy="14.500" r="4.500" strokeWidth="2" />
          <path d="M5 15 L15 5 M11 4.500 H15.500 V9 M4.500 11 V15.500 H9" stroke="#8c8c8c" strokeWidth="1.500" />
        </svg>
        <svg width="22" height="22" viewBox="0 0 22 22" className="ml-[9px]"><circle cx="11" cy="11" r="10.400" fill="#e4e4e4" stroke={G} /><path d="M8 6 L16 11 L8 16Z" fill="#a2a2a2" /></svg>
        <svg width="22" height="22" viewBox="0 0 22 22" className="ml-[9px]"><circle cx="11" cy="11" r="10.400" fill="#e4e4e4" stroke={G} /><rect x="7" y="7" width="8" height="8" fill="#9c9c9c" /></svg>
        <div className="ml-[7px] h-[31px] w-px bg-[#c0c0c0]" />
        <div className={`ml-[12px] flex h-[20px] w-[80px] items-center rounded-[2px] border border-[#adadad] bg-[#f2f2f2] pl-[2px] text-[11.500px] text-[#777] ${UI}`}>inf</div>
        <div className={`ml-[18px] flex h-[20px] w-[110px] items-center justify-between rounded-[2px] border border-[#adadad] bg-[#f2f2f2] pr-[4px] pl-[2px] text-[11.500px] tracking-[-0.2px] text-[#777] ${UI}`}>External<Caret /></div>
      </div>
      <div className="flex w-[48px] items-center border-r border-[#b4b4b4] pl-[8px]">
        <svg width="20" height="20" viewBox="0 0 20 20"><circle cx="10" cy="10" r="8.500" fill="#e8e8e8" stroke={G} /><path d="M6 10 L9 14 L14 6" stroke="#b0b0b0" strokeWidth="2" fill="none" /></svg>
        <div className="ml-[7px]"><Caret /></div>
      </div>
      <div className="flex items-center pl-[8px]">
        <svg width="20" height="20" viewBox="0 0 20 20" fill="none" stroke="#aaa"><path d="M4 0 V5 M10 0 V5 M16 0 V5 M2.500 3 L4 5.500 L5.500 3 M8.500 3 L10 5.500 L11.500 3 M14.500 3 L16 5.500 L17.500 3" /><rect x=".5" y="8.500" width="19" height="11" rx="1" fill="#e4e4e4" /><path d="M3 12.500 H17 M3 16 H17" strokeWidth="2" strokeDasharray="2 2" /></svg>
        <div className="ml-[10px]"><Caret /></div>
      </div>
    </div>
  );
}

function Palette() {
  return (
    <div className="flex w-[33px] shrink-0 flex-col items-center border-r border-[#85868c] bg-linear-to-r from-[#777] via-[#d5d5d5] via-20% to-[#f0f0f0] to-45% pt-[7px]">
      <Svg16>
        <circle cx="8" cy="8" r="5" stroke="#666" fill="#e8e8e8" /><path d="M5 8 H11 M7.500 5.500 L5 8 L7.500 10.500" stroke="#222" strokeWidth="1.500" />
      </Svg16>
      <div className="mt-[9px] mb-[12px] h-px w-[19px] bg-[#a0a0a0]" />
      <div className="flex flex-col gap-[12px]">
        <Svg16><path d="M.5 .5 H15.500 V15.500 H.5Z" stroke="#888" strokeDasharray="2 1.500" /><circle cx="7.500" cy="7" r="5" fill="#fff" stroke="#444" /><path d="M5 7 H10 M7.500 4.500 V9.500" stroke="#000" strokeWidth="1.400" /><path d="M11 11 L15 15" stroke="#333" strokeWidth="2" /></Svg16>
        <Svg16><rect x=".5" y="1.500" width="15" height="13" fill="#fff" stroke="#333" /><path d="M2.500 6 V3.500 H5.500 M10.500 3.500 H13.500 V6 M2.500 10 V12.500 H5.500 M13.500 10 V12.500 H10.500 M3 4 L6 6.500 M13 4 L10 6.500 M3 12 L6 9.500 M13 12 L10 9.500" stroke="#222" /></Svg16>
        <Svg16><path d="M1 5.500 H13" stroke="#000" /><path d="M1 10.500 H13" stroke="#666" /><path d="M11 3 L14 5.500 L11 8 M11 8 L14 10.500 L11 13" stroke="#333" /></Svg16>
        <div className="flex h-[16px] w-[16px] items-center">
          <div className={`flex h-[12px] w-[15px] items-center gap-px border border-[#333] bg-white pl-[1px] text-[8px] leading-none font-bold ${ARIAL}`}>
            A<svg width="5" height="6" viewBox="0 0 5 6"><path d="M0 .5 H5 M0 3 H5 M0 5.500 H5" stroke="#333" strokeWidth=".9" /></svg>
          </div>
        </div>
        <Svg16><rect x=".5" y="1.500" width="15" height="13" fill="#eee" stroke="#444" /><rect x="2" y="3" width="12" height="10" fill="#c2c2c2" /><path d="M2 9 Q5 3 8 8 T14 9 V13 H2Z" fill="#888" stroke="#555" /></Svg16>
      </div>
      <svg width="10" height="10" viewBox="0 0 10 10" className="mt-auto mb-[8px]"><path d="M1 0 L5 5 L1 10 M5 0 L9 5 L5 10" stroke="#333" fill="none" /></svg>
    </div>
  );
}

function Simulink() {
  return (
    <div className="flex h-[1200px] w-[1920px] shrink-0 flex-col overflow-hidden bg-[#f0f0f0]">
      <div className="relative flex h-[21px] shrink-0 items-start justify-between overflow-hidden border-b-2 border-[#2b3f66] bg-linear-to-r from-[#2c5fae] via-[#1d5fae] via-45% to-[#5b8cc2] pr-[3px] pl-[1px]">
        <svg className="absolute top-[5px] left-[696px] blur-[1.500px]" width="60" height="20" viewBox="0 0 60 20"><path d="M5 1 L22 3 L36 20 H6Z" fill="#e6fff8" /></svg>
        <div className="absolute top-0 left-[960px] h-full w-[300px] bg-linear-to-r from-[#6a9fdc]/80 to-transparent" />
        <div className="absolute top-0 left-[1500px] h-full w-[100px] bg-[#15407e]/50 blur-[10px]" />
        <div className="absolute inset-x-0 bottom-0 h-px bg-[#a5c3e6]" />
        <div className="relative flex items-center pt-[2px]">
          <SimulinkIcon />
          <div className="relative ml-[4px]">
            <div className="absolute -inset-x-2 inset-y-0 rounded-full bg-white/55 blur-[5px]" />
            <div className={`relative text-[12px] leading-[17px] tracking-[-0.1px] text-black ${UI}`}>heli_q8 *</div>
          </div>
        </div>
        <div className="relative -mt-px"><Caption restore /></div>
      </div>
      <div className={`flex h-[22px] shrink-0 items-center border-b border-[#b6bccc] bg-linear-to-b from-white from-10% via-[#d5daec] via-40% to-[#dfe4f4] pl-[8px] text-[12px] tracking-[-0.25px] text-[#6d6d6d] ${UI}`}>
        {menus.map(([m, n, w]) => (
          <span key={m} className={w}>
            {m.slice(0, n - 1)}
            <span className="underline underline-offset-2">{m[n - 1]}</span>
            {m.slice(n)}
          </span>
        ))}
      </div>
      <Toolbar />
      <div className="flex h-[22px] shrink-0 items-start border-b-2 border-[#85868c]">
        <div className={`flex h-[22px] w-[58px] items-center justify-center border-t border-r border-[#85868c] bg-linear-to-r from-[#888] to-white to-20% text-[11px] tracking-[-0.2px] text-black ${UI}`}>heli_q8</div>
      </div>
      <div className="flex min-h-0 flex-1">
        <Palette />
        <div className="flex w-[1887px] flex-col border-r border-[#85868c]">
          <div className="flex h-[29px] shrink-0 items-center border-b border-[#85868c] bg-white pr-[5px] pl-[2px]">
            <SimulinkIcon framed />
            <span className={`ml-[2px] pt-px text-[11px] tracking-[-0.2px] text-black ${UI}`}>heli_q8</span>
            <svg width="6" height="10" viewBox="0 0 6 10" className="ml-[6px]"><path d="M0 0 L5.500 5 L0 10Z" /></svg>
            <svg width="9" height="6" viewBox="0 0 9 6" className="ml-auto"><path d="M0 0 H9 L4.500 6Z" /></svg>
          </div>
          <div className="flex h-[25px] shrink-0 items-center border-b border-[#8a8a8a] bg-[#ffffcc] pt-[2px] pr-[7px] pl-[9px]">
            <svg width="16" height="16" viewBox="0 0 16 16"><path d="M8 .8 a6.800 6.300 0 0 1 2 12.500 Q10.500 15 9 15.500 Q7.500 15 7 13.400 A6.800 6.300 0 0 1 8 .8Z" fill="#cfe3f5" stroke="#8095aa" /><path d="M8 3 V5 M6.500 6.500 H8.500 V11 M6 11.200 H10.500" stroke="#1d4f9e" strokeWidth="1.600" /></svg>
            <span className={`ml-[5px] text-[12px] tracking-[0.180px] text-black ${ARIAL}`}>Cannot change the model 'heli_q8' while the simulation is running</span>
            <div className={`ml-auto flex h-[19px] w-[21px] items-center justify-center rounded-[3px] border border-[#707070] bg-linear-to-b from-[#f4f4f4] to-[#cfcfcf] text-[10px] text-black ${ARIAL}`}>X</div>
          </div>
          <div className="min-h-0 flex-1 overflow-hidden border-b border-[#85868c] bg-[#f5f5f5]">
            <Diagram />
          </div>
        </div>
      </div>
      <div className={`flex h-[20px] shrink-0 items-center pl-[7px] text-[11px] tracking-[-0.1px] text-black ${UI}`}>
        <span className="w-[954px]">External</span>
        <span className="w-[262px] text-[#000080] underline underline-offset-2">View diagnostics</span>
        <span className="w-[277px]">100%</span>
        <span className="w-[75px]">T=368.680</span>
        <div className="mr-[198px] h-[15px] w-[120px] rounded-[3px] border border-[#b2b2b2] bg-linear-to-b from-[#f2f2f2] via-[#c9c9c9] via-50% to-[#dcdcdc]" />
        <span>ode1</span>
      </div>
    </div>
  );
}

export default function App() {
  return (
    <div className="flex h-[1200px] w-[3840px] overflow-hidden">
      <Desktop />
      <Simulink />
    </div>
  );
}
